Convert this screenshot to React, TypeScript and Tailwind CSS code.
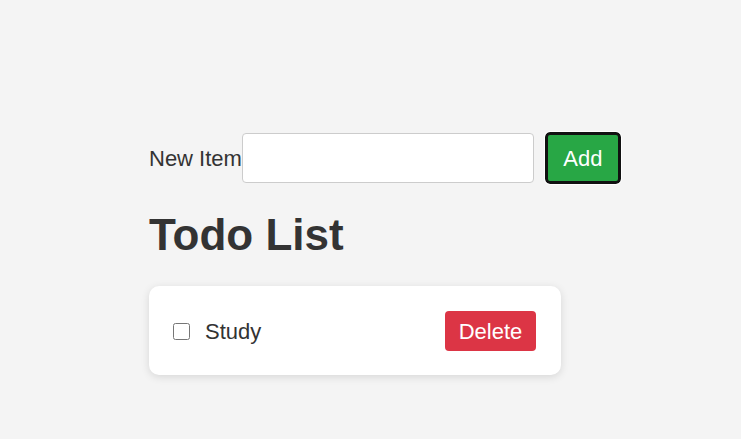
import { useState } from "react";

type Todo = { id: number; text: string; done: boolean };

export default function App() {
  const [todos, setTodos] = useState<Todo[]>([{ id: 1, text: "Study", done: false }]);
  const [draft, setDraft] = useState("");

  const addTodo = () => {
    if (!draft.trim()) return;
    setTodos([...todos, { id: Date.now(), text: draft.trim(), done: false }]);
    setDraft("");
  };

  return (
    <div className="min-h-[439px] bg-[#f4f4f4] pl-[149px] pt-[132px] font-['Liberation_Sans',Arial,sans-serif] text-[22px] text-[#333]">
      <div className="flex items-center">
        <label htmlFor="new-item" className="leading-[25px]">
          New Item
        </label>
        <input
          id="new-item"
          value={draft}
          onChange={(e) => setDraft(e.target.value)}
          className="h-[50px] w-[292px] rounded-[4px] border border-[#ccc] bg-white px-3 outline-none"
        />
        <button
          onClick={addTodo}
          className="ml-[11px] h-[52px] w-[76px] rounded-[5px] border-[3px] border-[#111] bg-[#28a745] text-white outline outline-1 outline-white"
        >
          Add
        </button>
      </div>

      <h1 className="mt-[26px] text-[44px] font-bold leading-[50px] text-[#333]">Todo List</h1>

      <ul className="mt-[26px] w-[412px]">
        {todos.map((todo) => (
          <li
            key={todo.id}
            className="flex items-center rounded-[10px] bg-white pb-6 pl-6 pr-[25px] pt-[25px] shadow-[0_2px_8px_rgba(0,0,0,0.12)]"
          >
            <input
              type="checkbox"
              checked={todo.done}
              onChange={() =>
                setTodos(todos.map((t) => (t.id === todo.id ? { ...t, done: !t.done } : t)))
              }
              className="m-0 h-[17px] w-[17px]"
            />
            <span className={`ml-[15px] ${todo.done ? "line-through" : ""}`}>{todo.text}</span>
            <button
              onClick={() => setTodos(todos.filter((t) => t.id !== todo.id))}
              className="ml-auto h-10 w-[91px] rounded-[4px] bg-[#dc3545] text-white"
            >
              Delete
            </button>
          </li>
        ))}
      </ul>
    </div>
  );
}
